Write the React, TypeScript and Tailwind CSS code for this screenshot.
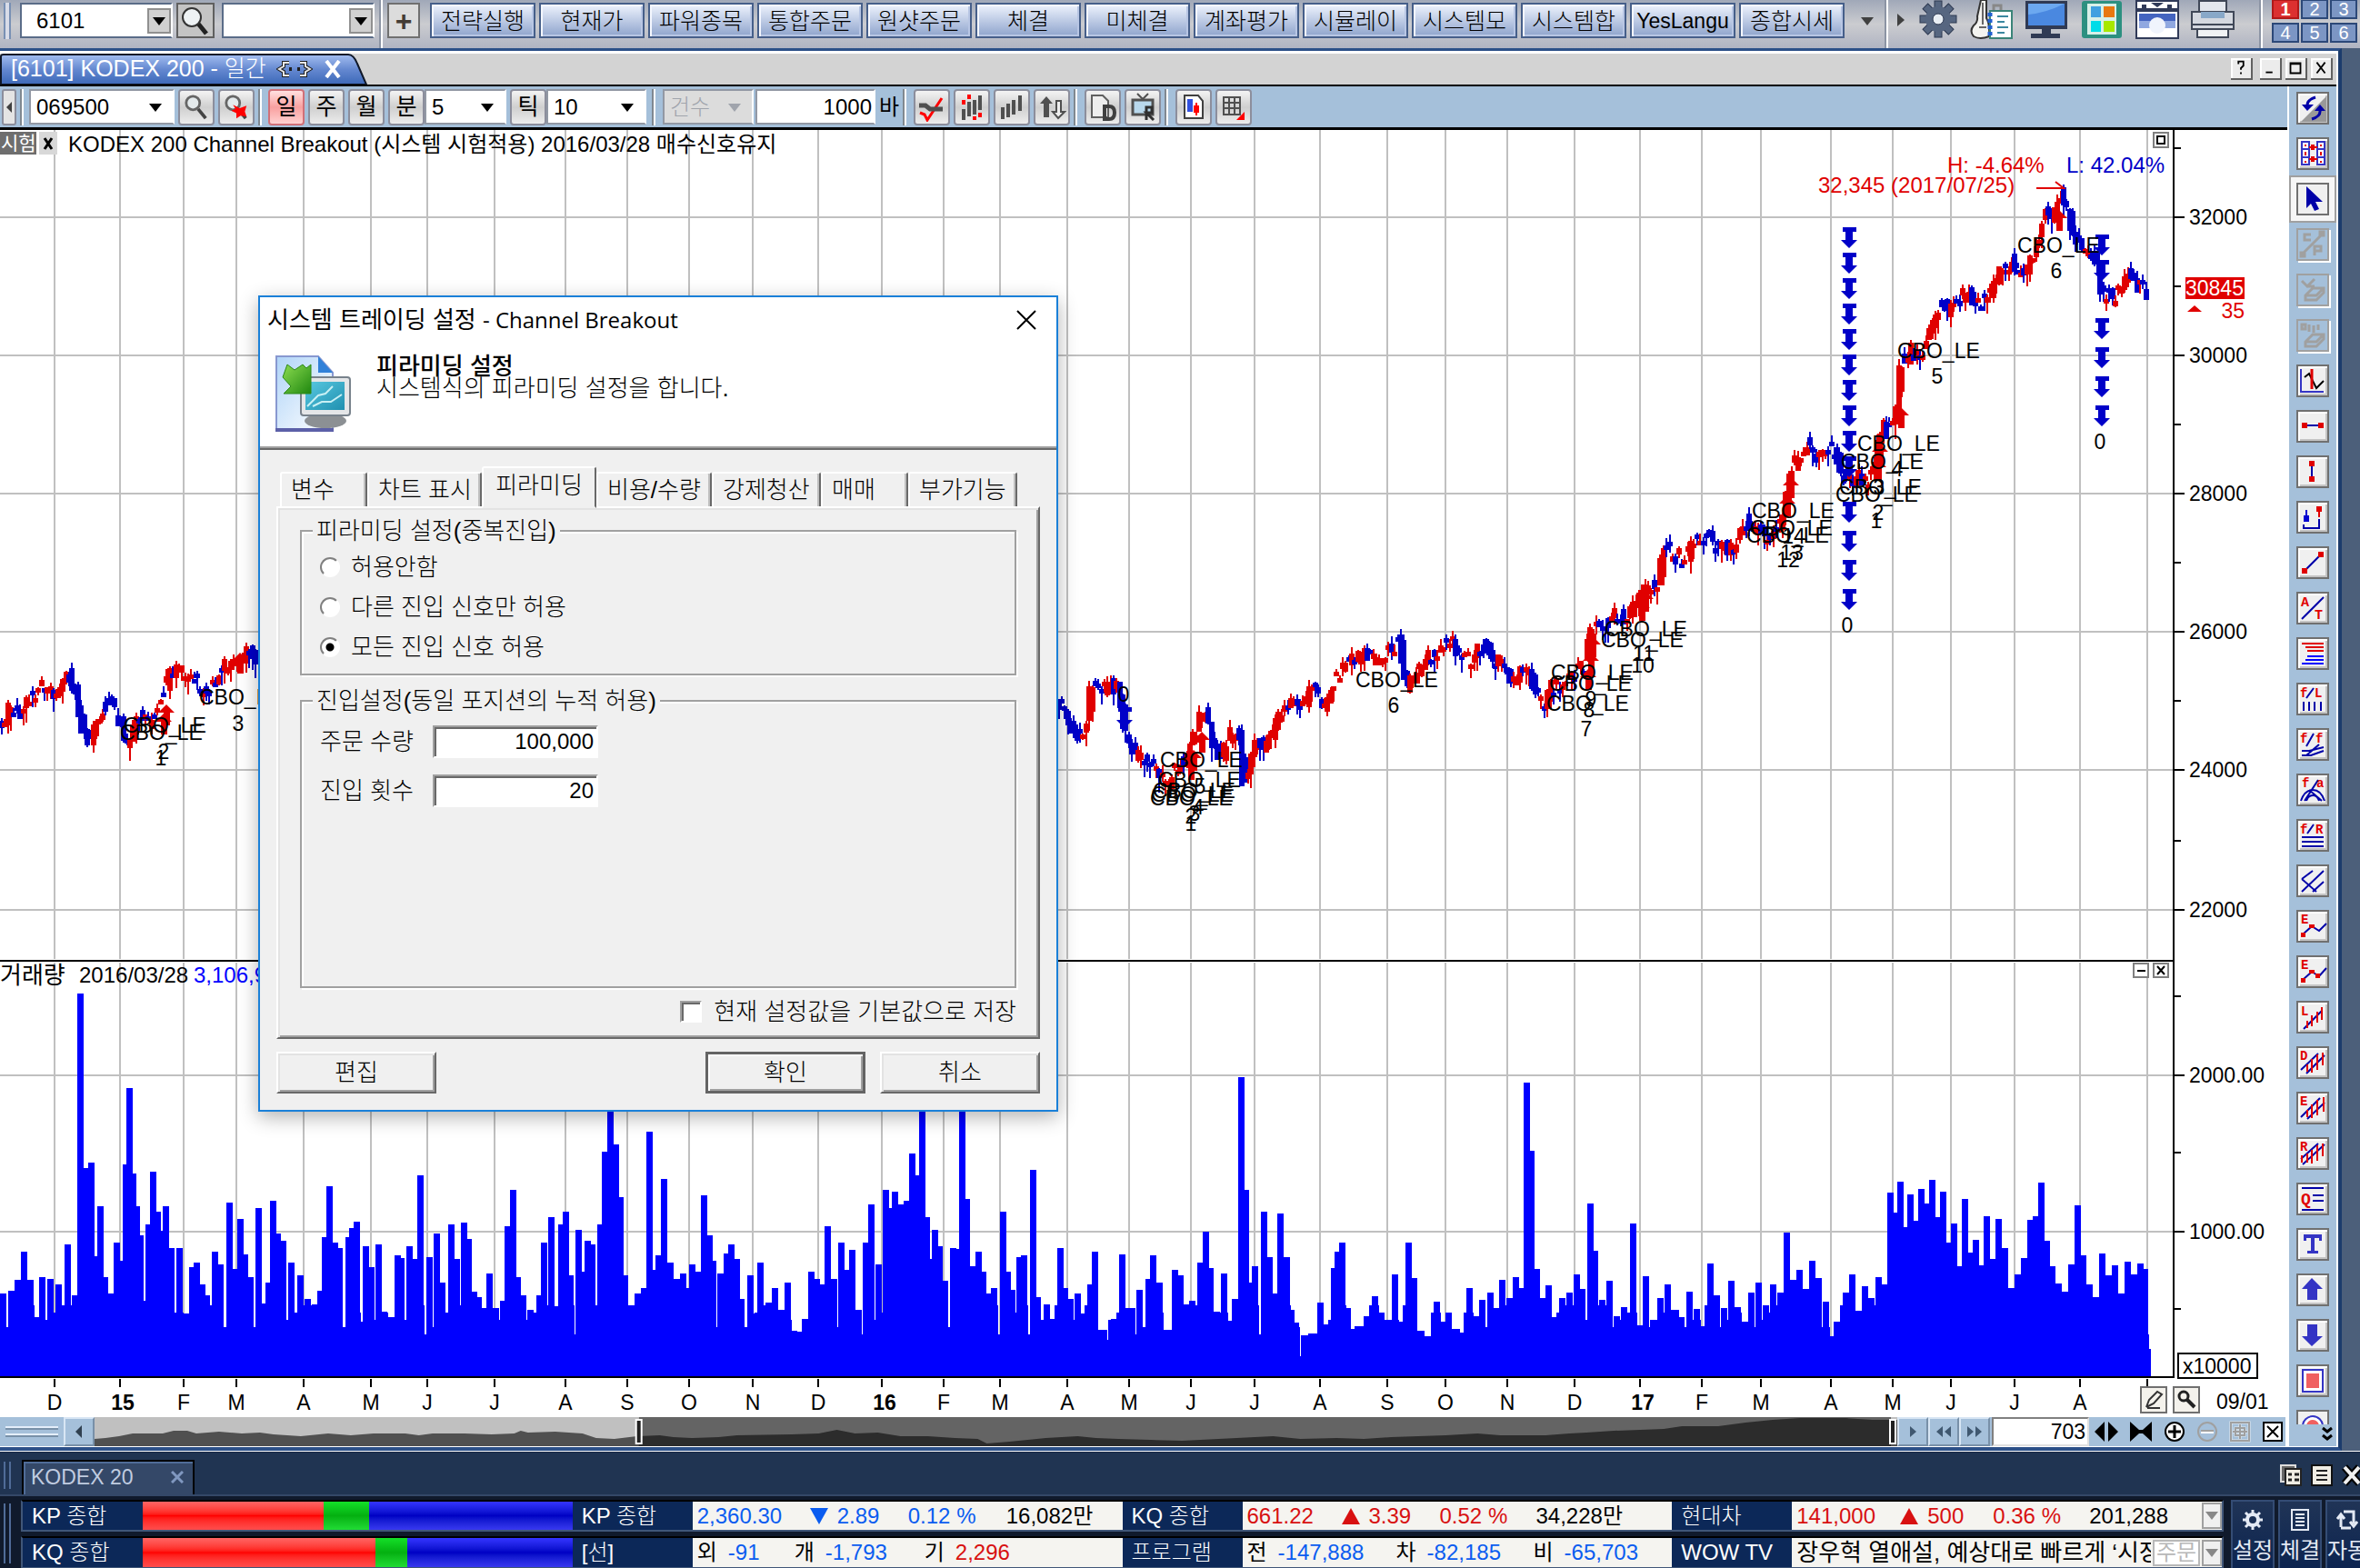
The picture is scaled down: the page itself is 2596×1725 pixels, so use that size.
import type { ReactNode } from 'react';

const BLUE = '#0000c8';
const RED = '#e00000';

const shortcuts = [
  '전략실행', '현재가', '파워종목', '통합주문', '원샷주문', '체결', '미체결',
  '계좌평가', '시뮬레이', '시스템모', '시스템합', 'YesLangu', '종합시세',
];

const months: [number, string][] = [
  [60, 'D'], [132, '15'], [202, 'F'], [260, 'M'], [334, 'A'], [408, 'M'], [470, 'J'], [544, 'J'], [622, 'A'],
  [690, 'S'], [758, 'O'], [828, 'N'], [900, 'D'], [970, '16'], [1038, 'F'], [1100, 'M'], [1174, 'A'], [1242, 'M'],
  [1310, 'J'], [1380, 'J'], [1452, 'A'], [1526, 'S'], [1590, 'O'], [1658, 'N'], [1732, 'D'], [1804, '17'],
  [1872, 'F'], [1937, 'M'], [2014, 'A'], [2082, 'M'], [2146, 'J'], [2216, 'J'], [2288, 'A'], [2362, ''],
];

const priceLevels: [number, string][] = [
  [239, '32000'], [391, '30000'], [543, '28000'], [695, '26000'], [847, '24000'], [1001, '22000'],
  [1183, '2000.00'], [1355, '1000.00'],
];
const minorTicks = [163, 315, 467, 619, 771, 925, 1096, 1268, 1440];

// closing price track: x, y
const pricePath: [number, number][] = [
  [1, 803], [14, 773], [24, 789], [33, 769], [46, 752], [62, 763], [75, 742], [83, 755], [91, 800], [102, 818],
  [113, 775], [123, 776], [134, 798], [142, 823], [153, 780], [165, 798], [177, 766], [191, 737], [210, 743],
  [230, 763], [244, 737], [260, 726], [277, 714], [284, 730], [400, 760], [1100, 790], [1169, 778], [1181, 809],
  [1196, 800], [1201, 757], [1220, 755], [1232, 757], [1236, 789], [1244, 823], [1268, 843], [1285, 861],
  [1299, 841], [1312, 823], [1325, 777], [1334, 817], [1346, 832], [1356, 806], [1364, 800], [1369, 868],
  [1382, 806], [1392, 829], [1406, 792], [1420, 769], [1435, 772], [1449, 755], [1459, 780], [1468, 749],
  [1483, 729], [1500, 720], [1515, 724], [1540, 704], [1548, 760], [1573, 720], [1598, 704], [1614, 728],
  [1631, 712], [1650, 729], [1664, 751], [1677, 734], [1686, 751], [1698, 774], [1707, 756], [1722, 752],
  [1736, 738], [1746, 735], [1748, 711], [1753, 693], [1765, 687], [1779, 676], [1793, 678], [1805, 658],
  [1815, 649], [1827, 640], [1830, 602], [1841, 613], [1855, 613], [1865, 595], [1880, 591], [1889, 604],
  [1913, 600], [1920, 571], [1932, 586], [1947, 591], [1961, 573], [1968, 542], [1971, 519], [1985, 493],
  [1992, 488], [1997, 502], [2009, 493], [2021, 504], [2033, 533], [2047, 524], [2057, 533], [2066, 497],
  [2071, 470], [2080, 475], [2088, 448], [2090, 392], [2095, 403], [2104, 383], [2114, 399], [2124, 368],
  [2131, 336], [2138, 332], [2145, 345], [2157, 328], [2167, 323], [2181, 332], [2190, 319], [2200, 296],
  [2214, 287], [2224, 301], [2231, 296], [2241, 269], [2250, 236], [2260, 236], [2267, 216], [2274, 223],
  [2281, 261], [2291, 269], [2303, 278], [2310, 305], [2314, 323], [2324, 328], [2334, 319], [2341, 305],
  [2351, 312], [2368, 323],
];

// volume bars: x, height
const volume: [number, number][] = [
  [3, 91], [12, 94], [19, 106], [26, 137], [33, 106], [40, 65], [46, 109], [55, 107], [64, 101], [74, 145], [82, 89],
  [88, 421], [93, 229], [96, 178], [100, 235], [105, 132], [110, 187], [115, 109], [121, 91], [128, 147], [133, 127],
  [138, 233], [142, 317], [146, 223], [150, 187], [154, 155], [158, 83], [163, 167], [168, 225], [173, 181],
  [177, 160], [182, 187], [188, 141], [197, 141], [205, 69], [211, 120], [216, 125], [222, 101], [227, 89],
  [236, 137], [242, 123], [252, 191], [258, 118], [264, 173], [269, 134], [275, 109], [284, 185], [290, 80],
  [295, 103], [300, 193], [305, 157], [311, 149], [320, 125], [330, 111], [338, 85], [346, 79], [352, 94], [357, 153],
  [362, 209], [368, 147], [373, 141], [383, 153], [387, 163], [392, 170], [397, 60], [402, 143], [408, 120], [416, 145],
  [422, 71], [430, 65], [437, 133], [441, 130], [450, 143], [456, 129], [462, 221], [472, 131], [480, 157], [486, 103],
  [496, 167], [502, 129], [510, 169], [515, 151], [521, 93], [526, 87], [532, 75], [538, 113], [545, 75], [553, 83],
  [558, 165], [564, 205], [569, 109], [575, 89], [583, 73], [593, 89], [598, 147], [606, 175], [611, 77], [617, 167],
  [622, 181], [627, 111], [636, 161], [641, 115], [646, 149], [651, 145], [660, 167], [665, 247], [671, 310], [677, 255],
  [682, 197], [687, 111], [694, 78], [701, 91], [708, 97], [714, 269], [720, 117], [724, 133], [730, 217], [737, 125],
  [744, 107], [751, 113], [756, 97], [761, 123], [768, 115], [774, 199], [780, 155], [784, 127], [792, 113], [799, 135],
  [804, 145], [810, 129], [815, 85], [825, 111], [831, 69], [836, 125], [845, 81], [852, 97], [859, 73], [866, 103],
  [872, 50], [879, 49], [885, 63], [892, 115], [898, 107], [903, 101], [910, 165], [917, 107], [925, 147], [931, 117],
  [937, 139], [943, 73], [952, 147], [958, 189], [966, 123], [974, 205], [979, 185], [984, 203], [990, 189], [997, 193],
  [1003, 245], [1007, 221], [1014, 301], [1019, 175], [1024, 129], [1028, 161], [1033, 143], [1039, 105], [1048, 141],
  [1054, 140], [1058, 295], [1063, 195], [1069, 121], [1076, 137], [1081, 115], [1087, 91], [1093, 97], [1103, 181],
  [1108, 115], [1113, 95], [1121, 131], [1126, 133], [1136, 227], [1141, 87], [1151, 79], [1158, 63], [1166, 141],
  [1171, 97], [1177, 85], [1185, 91], [1192, 69], [1199, 101], [1204, 137], [1213, 51], [1225, 63], [1234, 134],
  [1244, 75], [1253, 95], [1263, 107], [1268, 133], [1275, 103], [1284, 51], [1292, 117], [1298, 111], [1304, 79],
  [1311, 83], [1320, 125], [1326, 159], [1331, 119], [1338, 71], [1346, 113], [1353, 61], [1358, 85], [1365, 329],
  [1370, 205], [1375, 103], [1380, 121], [1390, 181], [1396, 131], [1401, 91], [1408, 179], [1415, 131], [1420, 73],
  [1425, 59], [1431, 22], [1437, 45], [1445, 47], [1452, 81], [1458, 57], [1467, 119], [1471, 137], [1476, 147],
  [1482, 75], [1488, 52], [1496, 55], [1506, 66], [1512, 88], [1519, 70], [1526, 62], [1534, 112], [1541, 60],
  [1549, 147], [1555, 108], [1562, 50], [1570, 44], [1580, 82], [1586, 60], [1593, 70], [1601, 52], [1608, 48],
  [1616, 97], [1624, 66], [1630, 84], [1639, 92], [1646, 75], [1652, 106], [1660, 86], [1667, 109], [1673, 97],
  [1679, 323], [1684, 248], [1690, 118], [1697, 86], [1703, 100], [1710, 65], [1718, 86], [1726, 92], [1734, 112],
  [1740, 96], [1749, 190], [1754, 138], [1762, 84], [1770, 105], [1778, 66], [1786, 76], [1796, 168], [1802, 56],
  [1810, 110], [1818, 62], [1826, 86], [1834, 101], [1842, 73], [1849, 65], [1858, 93], [1866, 74], [1874, 55],
  [1881, 124], [1888, 89], [1896, 75], [1904, 105], [1911, 76], [1918, 60], [1926, 92], [1934, 103], [1942, 78],
  [1950, 101], [1958, 92], [1965, 158], [1972, 106], [1979, 117], [1986, 96], [1993, 127], [2000, 108], [2008, 82],
  [2015, 44], [2023, 60], [2030, 92], [2037, 112], [2044, 72], [2051, 99], [2058, 86], [2066, 109], [2073, 101],
  [2079, 202], [2085, 180], [2090, 214], [2095, 164], [2101, 200], [2107, 171], [2113, 206], [2119, 190],
  [2125, 216], [2131, 175], [2137, 203], [2142, 147], [2149, 168], [2155, 121], [2161, 195], [2167, 136],
  [2173, 150], [2179, 122], [2185, 176], [2191, 129], [2198, 173], [2205, 141], [2212, 97], [2219, 112],
  [2226, 130], [2233, 172], [2239, 176], [2245, 213], [2251, 149], [2257, 121], [2264, 102], [2271, 93],
  [2278, 123], [2285, 188], [2291, 133], [2298, 101], [2305, 87], [2312, 135], [2319, 111], [2326, 122],
  [2333, 91], [2340, 126], [2347, 112], [2354, 124], [2359, 118],
];

// signal captions: x, y, order number, number x, number y
const signals: [number, number, string, number, number][] = [
  [2219, 270, '6', 2262, 298], [2087, 386, '5', 2131, 414], [2043, 488, '4', 2087, 516], [2025, 508, '3', 2067, 536],
  [2023, 536, '2', 2066, 564], [2019, 544, '1', 2064, 573], [1927, 562, '14', 1973, 590], [1925, 581, '13', 1971, 608],
  [1921, 589, '12', 1967, 616], [1765, 692, '11', 1808, 719], [1761, 704, '10', 1807, 732], [1706, 740, '9', 1750, 769],
  [1704, 752, '8', 1748, 781], [1701, 774, '7', 1745, 802], [219, 767, '3', 262, 796], [136, 798, '2', 180, 827],
  [132, 806, '1', 177, 834], [1276, 836, '5', 1320, 865], [1274, 858, '4', 1318, 888], [1268, 870, '3', 1314, 895],
  [1265, 878, '2', 1310, 898], [1266, 874, '1', 1310, 906], [1491, 748, '6', 1533, 776],
];

const sellArrows: [number, number][] = [
  [2034, 250], [2034, 278], [2034, 306], [2034, 334], [2034, 362], [2034, 390], [2034, 418], [2034, 446], [2034, 474],
  [2034, 502], [2034, 552], [2034, 584], [2034, 616], [2034, 648], [2312, 258], [2312, 286], [2312, 350], [2312, 382],
  [2312, 414], [2312, 446], [1237, 778],
];
const buyArrows: [number, number][] = [
  [2265, 231], [2091, 448], [2068, 488], [2066, 505], [1970, 525], [1966, 545], [1810, 650], [1806, 660], [1752, 700],
  [1750, 718], [1747, 736], [183, 775], [180, 785], [264, 718], [1322, 805], [1313, 825], [1310, 835],
];

const overview =
  '103,24 115,23 130,21 145,18 178,18 190,15 205,15 215,18 240,16 265,18 285,17 300,19 330,21 360,18 385,20 410,18 445,18 460,20 475,18 510,18 540,19 565,18 572,15 580,17 610,16 640,18 655,23 675,24 700,21 725,20 740,22 760,23 790,22 810,20 870,19 900,18 920,14 940,18 965,17 990,21 1020,21 1050,23 1075,24 1085,29 1110,27 1150,23 1185,21 1205,23 1230,24 1265,25 1300,26 1340,24 1380,22 1400,21 1430,24 1470,23 1500,24 1530,22 1590,20 1625,18 1650,20 1700,20 1726,18 1745,17 1775,15 1830,13 1850,10 1890,10 1920,6 1950,3 1980,1 2030,1 2060,3 2087,3';

function noise(i: number) {
  const v = Math.sin(i * 127.1) * 43758.5453;
  return v - Math.floor(v) - 0.5;
}

function priceAt(x: number) {
  const i = Math.max(1, pricePath.findIndex(p => p[0] >= x));
  const [x0, y0] = pricePath[i - 1];
  const [x1, y1] = pricePath[i];
  return y0 + ((y1 - y0) * (x - x0)) / (x1 - x0);
}

function Candles() {
  const out: ReactNode[] = [];
  for (let i = 0; i < 703; i++) {
    const x = 2 + i * 3.36;
    if (x > 284 && x < 1164) continue;
    const open = priceAt(Math.max(1, x - 3)) + noise(i) * 20;
    const close = priceAt(Math.min(2368, x + 2)) + noise(i + 400) * 20;
    const top = Math.min(open, close);
    const h = Math.max(5, Math.abs(close - open));
    const color = close < open ? RED : BLUE;
    out.push(
      <g key={i} fill={color}>
        <rect x={x - 3} y={top} width={6} height={h} />
        <rect x={x - 1} y={top - Math.abs(noise(i + 31)) * 16} width={2} height={h + Math.abs(noise(i + 77)) * 36} />
      </g>,
    );
  }
  return <g shapeRendering="crispEdges">{out}</g>;
}

function Chart() {
  return (
    <svg viewBox="0 143 2516 1416" className="block w-full bg-white" fontFamily="'Liberation Sans','Noto Sans CJK KR',sans-serif" fontSize="23">
      <g fill="#c0c0c0" shapeRendering="crispEdges">
        {months.map(([x]) => (
          <g key={x}>
            <rect x={x - 1} y={143} width={2} height={912} />
            <rect x={x - 1} y={1059} width={2} height={457} />
          </g>
        ))}
        {priceLevels.map(([y]) => (
          <rect key={y} x={0} y={y - 1} width={2390} height={2} />
        ))}
      </g>

      {/* axes */}
      <g fill="#000" shapeRendering="crispEdges">
        <rect x={2390} y={143} width={2} height={1373} />
        <rect x={0} y={1056} width={2391} height={2} />
        <rect x={0} y={1514} width={2392} height={2} />
        {minorTicks.map(y => (
          <rect key={y} x={2392} y={y - 1} width={7} height={2} />
        ))}
        {priceLevels.map(([y]) => (
          <rect key={y} x={2392} y={y - 1} width={11} height={2} />
        ))}
        {months.map(([x]) => (
          <rect key={x} x={x - 1} y={1517} width={2} height={9} />
        ))}
      </g>
      {priceLevels.map(([y, label]) => (
        <text key={y} x={2408} y={y + 8}>{label}</text>
      ))}
      {months.map(([x, label]) => (
        <text key={x} x={label.length > 1 ? x + 3 : x} y={1551} textAnchor="middle" fontWeight={label.length > 1 ? 700 : 400}>{label}</text>
      ))}

      {/* volume */}
      <g fill="#0000ff" shapeRendering="crispEdges">
        {volume.map(([x, h], i) => (
          <g key={i}>
            <rect x={x - 3} y={1514 - h} width={7} height={h} />
            <rect x={x - 6} y={1514 - Math.min(h, 46 + (i % 5) * 8)} width={11} height={Math.min(h, 46 + (i % 5) * 8)} />
          </g>
        ))}
        <rect x={0} y={1474} width={1428} height={40} />
        <rect x={1434} y={1474} width={926} height={40} />
        <rect x={2358} y={1484} width={8} height={30} />
      </g>

      <Candles />
      <g fill={BLUE}>
        {sellArrows.map(([x, y], i) => (
          <path key={i} d={`M${x - 7} ${y}h15v5h-4v9h5l-9 9l-9-9h5v-9h-3z`} />
        ))}
      </g>
      <g fill={RED}>
        {buyArrows.map(([x, y], i) => (
          <path key={i} d={`M${x} ${y}l9 9h-5v14h-7v-14h-6z`} />
        ))}
      </g>
      {signals.map(([x, y, n, nx, ny], i) => (
        <g key={i}>
          <text x={x} y={y + 8}>CBO_LE</text>
          <text x={nx} y={ny + 8} textAnchor="middle">{n}</text>
        </g>
      ))}
      <g textAnchor="middle">
        <text x={2032} y={696}>0</text>
        <text x={2310} y={494}>0</text>
        <text x={1236} y={772}>0</text>
      </g>

      <g fontSize="24">
        <text x={2142} y={190} fill={RED}>H: -4.64%</text>
        <text x={2273} y={190} fill={BLUE}>L: 42.04%</text>
        <text x={2000} y={212} fill={RED}>32,345 (2017/07/25)</text>
      </g>
      <path d="M2240 207h30l-9-7" fill="none" stroke={RED} strokeWidth={2} />

      <rect x={2404} y={305} width={65} height={24} fill={RED} />
      <text x={2404} y={325} fill="#fff">30845</text>
      <path d="M2406 343l8-7l8 7z" fill={RED} />
      <text x={2469} y={350} textAnchor="end" fill={RED}>35</text>

      {/* captions */}
      <rect x={0} y={145} width={40} height={25} fill="#6e6e6e" />
      <text x={1} y={165} fontSize="21" fill="#fff">시험</text>
      <rect x={43} y={145} width={20} height={25} fill="#d8d8d8" />
      <path d="M49 152l8 12m0-12l-8 12" stroke="#000" strokeWidth={3} />
      <text x={75} y={167} fontSize="24">KODEX 200 Channel Breakout (시스템 시험적용) 2016/03/28 매수신호유지</text>
      <text x={0} y={1082} fontSize="26">거래량</text>
      <text x={87} y={1081} fontSize="24">2016/03/28</text>
      <text x={213} y={1081} fontSize="24" fill="#0000ff">3,106,920</text>

      <g fill="#fff" stroke="#808080" strokeWidth={2}>
        <rect x={2369} y={146} width={16} height={16} />
        <rect x={2347} y={1060} width={16} height={15} />
        <rect x={2369} y={1060} width={16} height={15} />
      </g>
      <path d="M2373 150h8v8h-8zM2351 1068h9M2373 1063l8 9m0-9l-8 9" fill="none" stroke="#000" strokeWidth={2} />

      <rect x={2396} y={1489} width={87} height={27} fill="#fff" stroke="#000" strokeWidth={2} />
      <text x={2401} y={1511}>x10000</text>

      <g fill="#f4f2ec" stroke="#707070" strokeWidth={2}>
        <rect x={2355} y={1526} width={28} height={28} />
        <rect x={2391} y={1526} width={28} height={28} />
      </g>
      <path d="M2361 1548l3-8l9-9l5 3l-9 10l-8 4M2362 1549h14" fill="none" stroke="#333" strokeWidth={2} />
      <circle cx={2402} cy={1536} r={5} fill="none" stroke="#222" strokeWidth={3} />
      <path d="M2406 1540l8 8" stroke="#222" strokeWidth={4} />
      <text x={2438} y={1550}>09/01</text>
    </svg>
  );
}

const B = '#0000a8';
const I = '#3434c4';
const R = '#e00000';
const G = '#a0a0a0';

const letter = (s: string, x: number, y: number, size = 14) => (
  <text x={x} y={y} fontSize={size} fontWeight={700} fill={R} fontFamily="'Liberation Mono',monospace">{s}</text>
);

const drawingTools: { name: string; disabled?: boolean; active?: boolean; icon: ReactNode }[] = [
  { name: 'refresh', icon: <><path d="M31 3v28H3z" fill="#999" /><path d="M19 4q-10 3-9 10M15 28q10-3 9-10" fill="none" stroke={B} strokeWidth={3} /><path d="M4 12h13l-7 7zM18 19h12l-6-7z" fill={B} /></> },
  { name: 'link', icon: <><path d="M4 3h8v25H4zM21 3h8v25h-8zM4 11h8M4 20h8M21 11h8M21 20h8" fill="#fff" stroke={I} strokeWidth={2} /><path d="M12 9h9M12 22h9M8 6v2M8 14v4M8 24v2M25 6v2M25 14v4M25 24v2" stroke={R} strokeWidth={2} /><path d="M14 6h4v6h-4zM14 19h4v6h-4z" fill={R} /></> },
  { name: 'pointer', active: true, icon: <path d="M9 2v24l5-5l4 8l5-2l-4-8h8z" fill={B} /> },
  { name: 'cp', disabled: true, icon: <path d="M14 5H7v6h7M18 28V18h7v5h-7M4 27L27 4M3 25h4v4H3zM24 2h4v4h-4z" fill="none" stroke={G} strokeWidth={3} /> },
  { name: 'eraser', disabled: true, icon: <path d="M4 6l6 6l8-8M10 12h8M8 22l8-8h12v5l-8 8H8zM8 22h12l8-8" fill="none" stroke={G} strokeWidth={3} /> },
  { name: 'eraser-all', disabled: true, icon: <path d="M4 4h4v5H4zM12 4v8M17 5v8M22 4v6M8 23l8-8h12v5l-8 8H8zM8 23h12l8-8" fill="none" stroke={G} strokeWidth={3} /> },
  { name: 'crosshair', icon: <><path d="M3 3v25h25" fill="none" stroke={I} strokeWidth={2} /><path d="M7 12l5-4l8 16l8-8" fill="none" stroke="#000" strokeWidth={2} /><path d="M15 3v22" stroke={R} strokeWidth={3} /></> },
  { name: 'hline', icon: <><path d="M6 15h20" stroke={B} strokeWidth={2} /><path d="M4 12h6v6H4zM22 12h6v6h-6z" fill={R} /></> },
  { name: 'vline', icon: <><path d="M15 6v20" stroke={B} strokeWidth={2} /><path d="M12 4h6v6h-6zM12 21h6v6h-6z" fill={R} /></> },
  { name: 'range', icon: <><path d="M6 24v4h17V18" fill="none" stroke={B} strokeWidth={2} /><path d="M6 14h6v7H6zM8 8h2v6H8z" fill="#0000d0" /><path d="M20 4h6v6h-6zM22 10h2v6h-2z" fill={R} /></> },
  { name: 'trend', icon: <><path d="M6 26L26 6" stroke={B} strokeWidth={2} /><path d="M4 22h6v6H4zM22 4h6v6h-6z" fill={R} /></> },
  { name: 'at', icon: <><path d="M4 28L28 4" stroke={B} strokeWidth={2} />{letter('A', 3, 14, 15)}{letter('T', 18, 28, 15)}</> },
  { name: 'fib', icon: <><path d="M4 5h24M8 9h20M10 13h18" stroke={R} strokeWidth={2} /><path d="M10 19h18M8 23h20M4 27h24" stroke="#0000ff" strokeWidth={2} /></> },
  { name: 'fib-line', icon: <><path d="M9 15l8-11M6 19v10M12 19v10M18 19v10M25 19v10" stroke={B} strokeWidth={2} />{letter('f', 2, 14)}{letter('L', 18, 14)}</> },
  { name: 'fib-fan', icon: <><path d="M9 18l8-14M4 23h8l16-4M4 28h10l14-5M9 28l14-12" fill="none" stroke={B} strokeWidth={2} />{letter('f', 2, 14)}{letter('f', 19, 14)}</> },
  { name: 'fib-arc', icon: <><path d="M3 28q4-12 13-12t13 12M9 28q2-6 7-6t7 6M7 28L22 5M12 16l14 12" fill="none" stroke={B} strokeWidth={2} />{letter('f', 4, 13)}{letter('a', 20, 13)}</> },
  { name: 'fib-ret', icon: <><path d="M10 14l7-10M4 18h24M4 23h24M4 28h24" stroke={B} strokeWidth={2} />{letter('f', 2, 14)}{letter('R', 19, 14)}</> },
  { name: 'andrews', icon: <path d="M4 14l16 14M4 14L16 5M4 28L28 5M16 28l12-11" fill="none" stroke={B} strokeWidth={2} /> },
  { name: 'elliott-3', icon: <><path d="M5 25l10-9l8 5l8-8" fill="none" stroke={B} strokeWidth={2} /><path d="M3 23h5v5H3zM12 14h6v4h-6z" fill={R} />{letter('E', 3, 13)}</> },
  { name: 'elliott-5', icon: <><path d="M5 25l10-9l8 5l8-9" fill="none" stroke={B} strokeWidth={2} /><path d="M3 23h5v5H3zM12 14h6v4h-6zM19 18h5v5h-5z" fill={R} />{letter('E', 3, 13)}</> },
  { name: 'L', icon: <><path d="M6 29L26 9" stroke={B} strokeWidth={2} /><path d="M10 20v8M15 14v12M21 10v12M26 5v14" stroke={R} strokeWidth={2} />{letter('L', 3, 14)}</> },
  { name: 'D', icon: <><path d="M3 24L22 6M9 28L29 8" stroke={B} strokeWidth={2} /><path d="M10 18v8M15 12v15M21 7v17M27 5v14" stroke={R} strokeWidth={2} />{letter('D', 2, 13)}</> },
  { name: 'E', icon: <><path d="M3 26L24 5M10 28L29 10" stroke={B} strokeWidth={2} /><path d="M10 18v8M15 12v15M21 7v17M28 4v16" stroke={R} strokeWidth={2} />{letter('E', 2, 13)}</> },
  { name: 'R', icon: <><path d="M3 22L22 5M5 28L29 6" stroke={B} strokeWidth={2} /><path d="M4 18v8M10 16v10M15 12v15M21 7v17M27 5v14" stroke={R} strokeWidth={2} />{letter('R', 2, 13)}</> },
  { name: 'Q', icon: <><path d="M4 4h24M16 12h12M16 18h12M4 28h24" stroke={B} strokeWidth={2} />{letter('Q', 3, 22, 18)}</> },
  { name: 'text', icon: <path d="M6 5h20v7h-3V9h-5v14h4v3H10v-3h4V9H9v3H6z" fill={I} /> },
  { name: 'up', icon: <path d="M15 3l12 12h-6v12H10V15H4z" fill={I} /> },
  { name: 'down', icon: <path d="M15 28l12-11h-6V4H10v13H4z" fill={I} /> },
  { name: 'rect', icon: <><path d="M5 4h22v24H5z" fill="#fff" stroke={I} strokeWidth={2} /><path d="M9 8h14v16H9z" fill="#f06060" /></> },
];

function DrawingBar() {
  return (
    <aside className="relative w-[54px] shrink-0 border-l-2 border-white bg-[#a5c0da]">
      <div className="flex flex-col items-center gap-[14px] pt-[6px]">
        {drawingTools.map(t => (
          <button
            key={t.name}
            aria-label={t.name}
            disabled={t.disabled}
            className={
              t.disabled
                ? 'size-9 border-2 border-[#a0a0a0] shadow-[2px_2px_0_#fff]'
                : t.active
                  ? 'size-9 border-2 border-[#707070] bg-[#f0f0f0] outline-6 outline-[#f6f6f6] shadow-[0_0_0_8px_#a0a0a0]'
                  : 'size-9 border-2 border-[#707070] bg-[#f0f0f0] shadow-[inset_2px_2px_0_#fff,inset_-2px_-2px_0_#c4c4c4]'
            }
          >
            <svg viewBox="0 0 32 32" className="block size-8">{t.icon}</svg>
          </button>
        ))}
        <button aria-label="circle" className="h-4 w-9 overflow-hidden border-2 border-b-0 border-[#707070] bg-[#f0f0f0]">
          <svg viewBox="0 0 32 32" className="block size-8">
            <circle cx={16} cy={16} r={11} fill="#fff" stroke={I} strokeWidth={2} />
            <circle cx={16} cy={16} r={7} fill="#f06060" />
          </svg>
        </button>
      </div>
      <svg viewBox="0 0 12 18" className="absolute right-1 bottom-1 h-[18px] w-3">
        <path d="M1 2l5 4l5-4M1 10l5 4l5-4" fill="none" stroke="#000" strokeWidth={3} />
      </svg>
    </aside>
  );
}

function Arrow({ className = '' }: { className?: string }) {
  return (
    <svg viewBox="0 0 14 9" className={`h-[9px] w-[14px] ${className}`}>
      <path d="M0 0h14L7 9z" fill="currentColor" />
    </svg>
  );
}

function TopCombo({ value, label }: { value: string; label: string }) {
  return (
    <div className="relative h-[39px] w-[168px] border-2 border-[#5a6c88] border-r-white bg-white">
      <select aria-label={label} className="size-full appearance-none bg-white pl-4 text-[24px] leading-none">
        <option>{value}</option>
      </select>
      <span className="pointer-events-none absolute top-1 right-0 flex h-7 w-[26px] items-center justify-center border-2 border-[#909090] bg-[#d0d0d0]">
        <Arrow />
      </span>
    </div>
  );
}

function TopBar() {
  return (
    <header className="flex h-[53px] items-start overflow-hidden bg-linear-to-b from-[#a0a8b8] via-[#cbccd0] to-[#b0b4c2] pt-[3px] pl-1">
      <div className="mr-[10px] h-10 w-2 shrink-0 border-x-2 border-[#7890b4] bg-[#d8dce8]" />
      <div className="flex shrink-0 gap-1">
        <TopCombo value="6101" label="화면번호" />
        <button aria-label="검색" className="flex h-[39px] w-[42px] items-center justify-center border-2 border-[#606060] bg-[#c4c4c4]">
          <svg viewBox="0 0 32 34" className="h-[34px] w-8">
            <path d="M19 20l9 11" stroke="#222" strokeWidth={5} />
            <circle cx={12} cy={13} r={10} fill="#eef2f4" stroke="#333" strokeWidth={2} />
          </svg>
        </button>
        <div className="ml-1">
          <TopCombo value="" label="메뉴검색" />
        </div>
      </div>
      <div className="mx-[5px] -mt-1 h-[54px] w-1 shrink-0 border-l-2 border-[#8c94a4] bg-white" />
      <button className="h-[39px] w-9 shrink-0 border-2 border-[#707070] bg-[#dcdcdc] text-[32px] leading-[32px] font-bold text-[#443c34]">+</button>
      <nav className="ml-[11px] flex shrink-0 gap-1">
        {shortcuts.map(s => (
          <button key={s} className="h-[39px] w-[116px] border-2 border-[#465f8a] bg-linear-to-b from-[#eef3fd] to-[#8fa4cc] text-center text-[25px] leading-[34px] font-light whitespace-nowrap shadow-[inset_2px_2px_0_#f4f7ff,inset_-2px_-2px_0_#b8c6e4]">
            {s === 'YesLangu' ? <span className="text-[23px]">{s}</span> : s}
          </button>
        ))}
      </nav>
      <Arrow className="mt-[16px] ml-[18px] shrink-0 text-[#404040]" />
      <div className="ml-3 -mt-1 h-[54px] w-1 shrink-0 border-l-2 border-[#8c94a4] bg-white" />
      <svg viewBox="0 0 8 14" className="mt-3 ml-[10px] h-[14px] w-2 shrink-0"><path d="M0 0l8 7l-8 7z" fill="#404040" /></svg>
      <div className="-mt-[3px] ml-[15px] flex shrink-0 gap-[11px]">
        <svg viewBox="0 0 44 44" className="size-11">
          <g transform="translate(22 21)" fill="#566680" stroke="#2c3850" strokeWidth={1}>
            {[0, 45, 90, 135].map(a => (
              <rect key={a} x={-4} y={-20} width={8} height={40} transform={`rotate(${a})`} />
            ))}
            <circle r={14} stroke="none" />
            <circle r={6} fill="#e8eef4" />
          </g>
        </svg>
        <svg viewBox="0 0 50 44" className="h-11 w-[50px]">
          <path d="M14 0h6v20q4 6 3 20q-10 4-17 0Q1 34 6 28q5-4 4-10z" fill="#f4f4f0" stroke="#333" strokeWidth={2} />
          <path d="M16 3v24M12 30h8" stroke="#666" strokeWidth={2} />
          <path d="M28 11V6h8v6" fill="none" stroke="#888" strokeWidth={3} />
          <rect x={24} y={12} width={24} height={30} fill="#fff" stroke="#3a8478" strokeWidth={2} />
          <path d="M32 18h12M32 24h8M32 30h12M32 36h8" stroke="#3c88a0" strokeWidth={2} />
          <path d="M24 14v27" stroke="#2060d0" strokeWidth={5} strokeDasharray="4 3" />
        </svg>
        <svg viewBox="0 0 50 44" className="h-11 w-[50px]">
          <rect x={2} y={1} width={46} height={31} fill="#303a54" />
          <rect x={5} y={4} width={40} height={24} fill="#6ca8f0" />
          <path d="M5 16q20-2 40-12v24H5z" fill="#4a88e0" />
          <path d="M20 32h10v5h10v5H8v-5h12z" fill="#303a54" />
        </svg>
        <svg viewBox="0 0 50 44" className="h-11 w-[50px]">
          <rect x={3} y={1} width={44} height={41} rx={3} fill="#2c9080" />
          <rect x={9} y={4} width={32} height={34} fill="#d8f0e8" />
          <rect x={13} y={7} width={11} height={12} fill="#40a0e0" />
          <rect x={27} y={7} width={12} height={12} fill="#e87810" />
          <rect x={13} y={23} width={11} height={12} fill="#00dce8" />
          <rect x={27} y={23} width={12} height={12} fill="#a8e800" />
        </svg>
        <svg viewBox="0 0 50 44" className="h-11 w-[50px]">
          <path d="M2 1h46v9H2zM2 12h46v30H2z" fill="#fff" stroke="#303a58" strokeWidth={2} />
          <path d="M5 15h40v8H5z" fill="#4464c0" />
          <path d="M5 23h40v8H5z" fill="#90a8e0" />
          <path d="M8 5h5v4H8zM36 5h5v4h-5zM18 3h14l-7 5z" fill="#303a58" />
          <ellipse cx={25} cy={28} rx={9} ry={9} fill="#f0f4fc" />
        </svg>
        <svg viewBox="0 0 50 44" className="h-11 w-[50px]">
          <path d="M10 1h30v12H10z" fill="#e4e8ee" stroke="#404858" strokeWidth={2} />
          <path d="M2 13h46v19H2z" fill="#d4d8e0" stroke="#404858" strokeWidth={2} />
          <path d="M12 13h26v7H12z" fill="#88a8c8" />
          <path d="M2 27h46" stroke="#404858" strokeWidth={2} />
          <path d="M8 32h34v9H8z" fill="#f0f2f4" stroke="#404858" strokeWidth={2} />
        </svg>
      </div>
      <div className="ml-[26px] -mt-1 h-[54px] w-1 shrink-0 border-l-2 border-[#8c94a4] bg-white" />
      <div className="-mt-1 ml-[10px] grid shrink-0 grid-cols-3 gap-x-[2px] gap-y-1">
        {['1', '2', '3', '4', '5', '6'].map(n => (
          <button
            key={n}
            className={`h-[22px] w-[30px] border-2 text-[20px] leading-[18px] text-white ${n === '1' ? 'border-[#b01818] bg-[#dc3030] font-bold' : 'border-[#2c4878] bg-[#7c96c4]'}`}
          >
            {n}
          </button>
        ))}
      </div>
    </header>
  );
}

function TitleTabs() {
  return (
    <div className="flex h-9 items-center border-b-2 border-black bg-[#d3d3d3]">
      <div className="relative flex h-[34px] w-[404px] items-center pl-3 whitespace-nowrap">
        <svg viewBox="0 0 404 34" className="absolute inset-0 h-[34px] w-[404px]">
          <defs>
            <linearGradient id="tab" x1="0" y1="0" x2="0" y2="1">
              <stop offset="0" stopColor="#a4bef0" />
              <stop offset="0.5" stopColor="#6488d0" />
              <stop offset="1" stopColor="#3c68b8" />
            </linearGradient>
          </defs>
          <path d="M1 34V3q0-2 3-2h379q6 0 10 10l10 23z" fill="url(#tab)" stroke="#101828" strokeWidth={2} />
        </svg>
        <span className="relative w-[292px] text-[25px] font-light text-white">[6101] KODEX 200 - 일간</span>
        <svg viewBox="0 0 40 20" className="relative h-5 w-10">
          <path d="M14 3H8v4l-5 3l5 3v4h6M26 3h6v4l5 3l-5 3v4h-6M14 10h3M23 10h3" fill="none" stroke="#202020" strokeWidth={4} />
          <path d="M14 3H8v4l-5 3l5 3v4h6M26 3h6v4l5 3l-5 3v4h-6" fill="none" stroke="#e8e8e8" strokeWidth={2} />
        </svg>
        <svg viewBox="0 0 20 20" className="relative ml-3 size-5"><path d="M3 1l14 18M17 1L3 19" stroke="#fff" strokeWidth={4} /></svg>
      </div>
      <div className="ml-auto flex gap-1 pr-1">
        {['M9 7V4h6v5l-3 3v2M12 17v2', 'M7 17h8', 'M6 6h12v12H6zM6 7h12', 'M7 5l10 13M17 5L7 18'].map((d, i) => (
          <button
            key={d}
            aria-label={['도움말', '최소화', '최대화', '닫기'][i]}
            className={`h-6 w-6 border-r-2 border-b-2 border-[#606060] bg-[#ececec] shadow-[inset_2px_2px_0_#fff] ${i === 0 ? 'mr-1' : ''}`}
          >
            <svg viewBox="0 0 24 24" className="size-[22px]"><path d={d} fill="none" stroke="#000" strokeWidth={2} /></svg>
          </button>
        ))}
      </div>
    </div>
  );
}

const toolBtn = 'flex h-10 w-10 shrink-0 items-center justify-center rounded-[4px] border-2 border-[#8c8e9c] bg-linear-to-b from-[#f4f4f4] via-[#cfcfcf] to-[#ececec] text-[25px] leading-none';

function Sep() {
  return <div className="h-10 w-1 shrink-0 border-l-2 border-[#808890] bg-white" />;
}

function ToolCombo({ value, label, width, muted }: { value: string; label: string; width: string; muted?: boolean }) {
  return (
    <div className={`relative h-[39px] shrink-0 border-2 border-[#9298a4] border-r-white ${width} ${muted ? 'bg-[#dcdcdc] text-[#a0a4ac]' : 'bg-white'}`}>
      <select aria-label={label} className="size-full appearance-none pl-[6px] text-[24px] leading-none font-light">
        <option>{value}</option>
      </select>
      <Arrow className="pointer-events-none absolute top-[14px] right-3" />
    </div>
  );
}

function Toolbar() {
  return (
    <div className="flex h-[48px] items-center border-b-3 border-black bg-[#a5c0da] pl-[2px] whitespace-nowrap">
      <button aria-label="이전" className="flex h-10 w-4 items-center justify-center rounded-[3px] border-2 border-[#8c8e9c] bg-[#e4e4e4]">
        <svg viewBox="0 0 6 12" className="h-3 w-[6px]"><path d="M6 0v12L0 6z" fill="#404040" /></svg>
      </button>
      <div className="ml-1"><Sep /></div>
      <div className="ml-[6px] flex items-center gap-1">
        <ToolCombo value="069500" label="종목코드" width="w-[160px]" />
        <button aria-label="종목검색" className={toolBtn}>
          <svg viewBox="0 0 28 30" className="size-7"><path d="M16 17l9 11" stroke="#444" strokeWidth={4} /><circle cx={10} cy={10} r={8} fill="#e4eaec" stroke="#666" strokeWidth={3} /></svg>
        </button>
        <button aria-label="종목추가" className={toolBtn}>
          <svg viewBox="0 0 28 30" className="size-7"><path d="M16 17l9 11" stroke="#444" strokeWidth={4} /><circle cx={10} cy={10} r={8} fill="#e4eaec" stroke="#666" strokeWidth={3} /><path d="M10 12l8 4l8-3l-2 7l2 6l-7-1l-5 3v-6l-6-3l5-2z" fill="#ff0000" /></svg>
        </button>
      </div>
      <div className="mx-1"><Sep /></div>
      <div className="flex items-center gap-1 pl-[3px]">
        <button className="flex h-10 w-10 shrink-0 items-center justify-center rounded-[4px] border-2 border-[#d07078] bg-linear-to-b from-[#ffe0e0] via-[#f8a0a0] to-[#ffd0d0] text-[25px] leading-none">일</button>
        <button className={toolBtn}>주</button>
        <button className={toolBtn}>월</button>
        <div className="flex items-center">
          <button className={toolBtn}>분</button>
          <ToolCombo value="5" label="분 간격" width="w-[90px]" />
        </div>
        <div className="flex items-center">
          <button className={toolBtn}>틱</button>
          <ToolCombo value="10" label="틱 간격" width="w-[110px]" />
        </div>
      </div>
      <div className="mr-2 ml-[6px]"><Sep /></div>
      <ToolCombo value="건수" label="조회 기준" width="w-[100px]" muted />
      <input aria-label="봉 개수" defaultValue="1000" className="ml-[2px] h-[39px] w-[132px] border-2 border-[#9298a4] border-r-white bg-white pr-[2px] text-right text-[24px]" />
      <span className="ml-1 text-[24px]">바</span>
      <div className="mr-2 ml-1"><Sep /></div>
      <div className="flex gap-1">
        <button aria-label="추세" className={toolBtn}>
          <svg viewBox="0 0 32 32" className="size-8"><path d="M3 22l5 2l3 6l8-12l8-12" fill="none" stroke="#ff0000" strokeWidth={3} /><path d="M2 14h7l5 4h14" fill="none" stroke="#505050" strokeWidth={5} /></svg>
        </button>
        <button aria-label="신호" className={toolBtn}>
          <svg viewBox="0 0 32 32" className="size-8"><path d="M7 18v12M13 10v16M19 8v16M25 3v16" stroke="#505050" strokeWidth={4} /><path d="M5 8h4v5H5zM11 2h4v5h-4zM17 26h4v4h-4zM23 22h4v5h-4z" fill="#ff0000" /></svg>
        </button>
        <button aria-label="막대" className={toolBtn}>
          <svg viewBox="0 0 32 32" className="size-8"><path d="M6 16v13M12 12v15M18 8v16M25 3v17" stroke="#505050" strokeWidth={4} /></svg>
        </button>
        <button aria-label="상하" className={toolBtn}>
          <svg viewBox="0 0 32 32" className="size-8"><path d="M10 4l7 8h-4v15H7V12H3z" fill="#505050" /><path d="M21 9h5v12h4l-7 7l-6-7h4z" fill="#eee" stroke="#505050" strokeWidth={2} /></svg>
        </button>
      </div>
      <div className="mr-2 ml-1"><Sep /></div>
      <div className="flex gap-1">
        <button aria-label="문서" className={toolBtn}>
          <svg viewBox="0 0 32 32" className="size-8"><path d="M4 3h12l6 6v18H4z" fill="#eee" stroke="#606060" strokeWidth={2} /><path d="M18 15h5q6 0 6 7t-6 7h-5z" fill="none" stroke="#404040" strokeWidth={4} /></svg>
        </button>
        <button aria-label="실시간" className={toolBtn}>
          <svg viewBox="0 0 32 32" className="size-8"><path d="M10 1l6 6l6-6" fill="none" stroke="#505050" strokeWidth={2} /><rect x={5} y={8} width={22} height={16} fill="#b8d8ec" stroke="#505050" strokeWidth={3} /><path d="M20 30V16h6v6h-6l8 8" fill="none" stroke="#303030" strokeWidth={3} /></svg>
        </button>
      </div>
      <div className="mr-2 ml-1"><Sep /></div>
      <div className="flex gap-1">
        <button aria-label="캔들" className={toolBtn}>
          <svg viewBox="0 0 32 32" className="size-8"><path d="M6 3h15l5 6v19H6z" fill="#fff" stroke="#404040" strokeWidth={2} /><path d="M9 7h6v14H9z" fill="#3050e0" /><path d="M19 11v14M17 15h4v6h-4z" fill="#fff" stroke="#f00" strokeWidth={2} /></svg>
        </button>
        <button aria-label="표" className={toolBtn}>
          <svg viewBox="0 0 32 32" className="size-8"><path d="M5 5h18v19H5zM11 5v19M17 5v19M5 11h18M5 17h18" fill="none" stroke="#505050" strokeWidth={2} /><path d="M28 21v9h-9z" fill="#ff0000" /></svg>
        </button>
      </div>
    </div>
  );
}

function RangeBar() {
  const btn = 'flex h-8 w-[34px] shrink-0 items-center justify-center border-2 border-[#d8e6f4] border-r-[#7890a8] border-b-[#7890a8] bg-[#a5c0da]';
  return (
    <div className="flex h-8 bg-[#a5c0da]">
      <div className="flex w-[70px] shrink-0 flex-col justify-center gap-1 px-[6px]">
        <div className="h-1 border-t-2 border-[#e4eefa] bg-[#7890a8]" />
        <div className="h-1 border-t-2 border-[#e4eefa] bg-[#7890a8]" />
      </div>
      <button aria-label="왼쪽" className={btn}>
        <svg viewBox="0 0 10 14" className="h-[14px] w-[10px]"><path d="M8 0v14L1 7z" fill="#304050" /></svg>
      </button>
      <svg viewBox="103 0 1984 32" preserveAspectRatio="none" className="h-8 min-w-0 flex-1">
        <rect x={103} y={0} width={1984} height={32} fill="#c0c0c0" />
        <polygon points={`103,32 ${overview} 2087,32`} fill="#505050" />
        <clipPath id="picked"><rect x={702} y={0} width={1378} height={32} /></clipPath>
        <g clipPath="url(#picked)">
          <rect x={702} y={0} width={1378} height={32} fill="#646464" />
          <polygon points={`103,32 ${overview} 2087,32`} fill="#2c2c2c" />
        </g>
        <rect x={699} y={3} width={6} height={26} fill="#202020" stroke="#fff" strokeWidth={2} />
        <rect x={2079} y={3} width={6} height={26} fill="#202020" stroke="#fff" strokeWidth={2} />
      </svg>
      <button aria-label="오른쪽" className={btn}><svg viewBox="0 0 24 14" className="h-[14px] w-6"><path d="M9 1l7 6l-7 6z" fill="#405870" /></svg></button>
      <button aria-label="처음" className={btn}><svg viewBox="0 0 24 14" className="h-[14px] w-6"><path d="M11 1v12L4 7zM20 1v12l-7-6z" fill="#405870" /></svg></button>
      <button aria-label="끝" className={btn}><svg viewBox="0 0 24 14" className="h-[14px] w-6"><path d="M4 1v12l7-6zM13 1v12l7-6z" fill="#405870" /></svg></button>
      <input aria-label="표시 봉 수" defaultValue="703" className="ml-[2px] h-8 w-[107px] shrink-0 border-2 border-[#808080] border-r-[#e0e0e0] border-b-[#e0e0e0] bg-white pr-[2px] text-right text-[23px]" />
      <div className="flex w-[218px] shrink-0 items-center gap-3 border-r-2 border-white pl-[6px]">
        <svg viewBox="0 0 26 24" className="h-6 w-[26px]"><path d="M11 1v22L0 12zM15 1v22l11-11z" /></svg>
        <svg viewBox="0 0 26 24" className="h-6 w-[26px]"><path d="M1 1v22l10-9h4l10 9V1L15 10h-4z" /></svg>
        <svg viewBox="0 0 24 24" className="size-6"><circle cx={12} cy={12} r={10} fill="#fff" stroke="#000" strokeWidth={2} /><path d="M12 5v14M5 12h14" stroke="#000" strokeWidth={3} /></svg>
        <svg viewBox="0 0 24 24" className="size-6"><circle cx={12} cy={12} r={10} fill="none" stroke="#a0a0a0" strokeWidth={2} /><path d="M5 11h14" stroke="#a0a0a0" strokeWidth={2} /><path d="M5 13h14" stroke="#fff" strokeWidth={2} /></svg>
        <svg viewBox="0 0 24 24" className="size-6"><path d="M2 2h20v20H2zM12 4v16M4 12h16M7 8h10v8H7z" fill="none" stroke="#e8eef4" strokeWidth={3} /><path d="M2 2h20v20H2zM12 4v16M4 12h16M7 8h10v8H7z" fill="none" stroke="#a0a0a0" strokeWidth={2} /></svg>
        <svg viewBox="0 0 24 24" className="size-6"><rect x={2} y={2} width={20} height={20} fill="#fff" stroke="#000" strokeWidth={2} /><path d="M6 6l12 12M18 6L6 18" stroke="#000" strokeWidth={2} /></svg>
      </div>
    </div>
  );
}

const raised = 'border-2 border-white border-r-[#696969] border-b-[#696969] shadow-[inset_2px_2px_0_#e3e3e3,inset_-2px_-2px_0_#a0a0a0]';

const tabs: [string, string][] = [
  ['변수', 'w-[96px]'], ['차트 표시', 'w-[126px]'], ['피라미딩', 'w-[126px]'], ['비용/수량', 'w-[127px]'],
  ['강제청산', 'w-[120px]'], ['매매', 'w-[96px]'], ['부가기능', 'w-[120px]'],
];

function SettingsDialog() {
  return (
    <div role="dialog" aria-labelledby="dialog-title" className="absolute top-[325px] left-[284px] w-[880px] border-2 border-[#1a80d8] bg-[#f0f0f0] text-[26px] font-light shadow-[0_6px_20px_rgba(0,0,0,0.3)]">
      <div className="h-[166px] border-b-2 border-[#a0a0a0] bg-white">
        <div className="flex h-[50px] items-center pl-2">
          <h2 id="dialog-title" className="font-normal">
            시스템 트레이딩 설정 <span className="font-[Open_Sans] text-[24px]">- Channel Breakout</span>
          </h2>
          <button aria-label="닫기" className="mr-[22px] ml-auto">
            <svg viewBox="0 0 22 22" className="size-[22px]"><path d="M1 1l20 20M21 1L1 21" stroke="#000" strokeWidth={2} /></svg>
          </button>
        </div>
        <div className="flex gap-[26px] pt-[10px] pl-4">
          <svg viewBox="0 0 86 90" className="h-[90px] w-[86px]">
            <defs>
              <linearGradient id="page" x1="0" y1="0" x2="1" y2="1"><stop offset="0" stopColor="#b0d4f8" /><stop offset="1" stopColor="#fff" /></linearGradient>
              <linearGradient id="screen" x1="0" y1="0" x2="1" y2="1"><stop offset="0" stopColor="#58c8e0" /><stop offset="1" stopColor="#2090b0" /></linearGradient>
              <linearGradient id="leaf" x1="0" y1="0" x2="1" y2="1"><stop offset="0" stopColor="#8cdc50" /><stop offset="1" stopColor="#208810" /></linearGradient>
            </defs>
            <path d="M2 5h46l16 18v62H2z" fill="url(#page)" stroke="#8898d0" strokeWidth={2} />
            <path d="M48 5l16 18H48z" fill="#3080d8" />
            <path d="M1 86h64" stroke="#5c60a8" strokeWidth={4} />
            <ellipse cx={56} cy={76} rx={23} ry={8} fill="#8c9094" />
            <rect x={29} y={28} width={54} height={42} rx={3} fill="#e4e6e8" stroke="#78828c" strokeWidth={2} />
            <rect x={34} y={33} width={43} height={31} fill="url(#screen)" />
            <path d="M36 60l12-12l8-2l8-8M42 60l10-5h10l12-8" fill="none" stroke="#c8f0f4" strokeWidth={2} />
            <path d="M14 14l8 6l9-6l4 4l5-4v32H10l8-8L9 28z" fill="url(#leaf)" stroke="#2c8818" />
          </svg>
          <div className="pt-1 leading-6">
            <p className="font-medium">피라미딩 설정</p>
            <p>시스템식의 피라미딩 설정을 합니다.</p>
          </div>
        </div>
      </div>
      <div className="border-t-2 border-[#696969] px-[18px] pt-[18px] pb-[18px]">
        <div role="tablist" className="flex h-11 items-end pl-1">
          {tabs.map(([name, w]) =>
            name === '피라미딩' ? (
              <button key={name} role="tab" aria-selected className={`relative -mb-[2px] h-[46px] rounded-t-[3px] border-2 border-white border-r-[#696969] border-b-[#f0f0f0] bg-[#f0f0f0] pb-1 text-center leading-none whitespace-nowrap ${w}`}>{name}</button>
            ) : (
              <button key={name} role="tab" className={`h-[38px] rounded-t-[3px] border-2 border-b-0 border-white border-r-[#696969] pl-[10px] text-left leading-none whitespace-nowrap shadow-[inset_-2px_0_0_#c0c0c0] ${w}`}>{name}</button>
            ),
          )}
        </div>
        <div className={`px-6 pt-[11px] pb-[12px] ${raised}`}>
          <fieldset className="h-[173px] border-2 border-[#a0a0a0] px-5 shadow-[2px_2px_0_#fff,inset_2px_2px_0_#fff]">
            <legend className="-ml-2 bg-[#f0f0f0] px-1 leading-[28px]">피라미딩 설정(중복진입)</legend>
            <div className="flex flex-col gap-4 pt-3">
              {['허용안함', '다른 진입 신호만 허용', '모든 진입 신호 허용'].map((s, i) => (
                <label key={s} className="flex items-center gap-3 leading-7">
                  <input
                    type="radio"
                    name="pyramiding"
                    defaultChecked={i === 2}
                    className="size-[22px] appearance-none rounded-full border-2 border-[#808080] border-r-white border-b-white bg-white checked:bg-[radial-gradient(circle,#000_0_4px,#fff_5px)]"
                  />
                  {s}
                </label>
              ))}
            </div>
          </fieldset>
          <fieldset className="mt-[14px] h-[330px] border-2 border-[#a0a0a0] px-5 shadow-[2px_2px_0_#fff,inset_2px_2px_0_#fff]">
            <legend className="-ml-2 bg-[#f0f0f0] px-1 leading-[28px]">진입설정(동일 포지션의 누적 허용)</legend>
            <div className="flex flex-col gap-[18px] pt-[13px]">
              {[['주문 수량', '100,000'], ['진입 횟수', '20']].map(([name, value]) => (
                <label key={name} className="flex h-9 items-center">
                  <span className="w-[124px]">{name}</span>
                  <input defaultValue={value} className="h-9 w-[182px] border-2 border-[#a0a0a0] border-r-white border-b-white bg-white pr-[3px] text-right text-[24px] shadow-[inset_2px_2px_0_#696969]" />
                </label>
              ))}
            </div>
          </fieldset>
          <label className="mt-[10px] flex items-center justify-end gap-[13px] leading-8">
            <input type="checkbox" className="size-6 appearance-none border-2 border-[#a0a0a0] border-r-white border-b-white bg-white shadow-[inset_2px_2px_0_#696969]" />
            현재 설정값을 기본값으로 저장
          </label>
        </div>
        <div className="flex gap-4 pt-[14px]">
          <button className={`h-[46px] w-44 leading-none ${raised}`}>편집</button>
          <button className="ml-auto h-[46px] w-44 border-3 border-[#646464] leading-none shadow-[inset_2px_2px_0_#fff,inset_-2px_-2px_0_#a0a0a0]">확인</button>
          <button className={`h-[46px] w-44 leading-none ${raised}`}>취소</button>
        </div>
      </div>
    </div>
  );
}

const blue = 'text-[#0a5cf0]';
const red = 'text-[#d81010]';

function DockLabel({ children }: { children: ReactNode }) {
  return <div className="flex items-center bg-[#0c2858] pl-[10px] text-[24px] font-light text-white">{children}</div>;
}

function Gauge({ parts }: { parts: [number, number, number] }) {
  return (
    <div className="flex">
      <div className="bg-linear-to-b from-[#ff6464] via-[#ff0000] to-[#ff4c4c]" style={{ flexGrow: parts[0] }} />
      <div className="bg-linear-to-b from-[#14e028] via-[#04b010] to-[#20dc34]" style={{ flexGrow: parts[1] }} />
      <div className="bg-linear-to-b from-[#3434ff] via-[#0000c4] to-[#3838f0]" style={{ flexGrow: parts[2] }} />
    </div>
  );
}

function Quote({ cols, tone, up, v }: { cols: string; tone: string; up?: boolean; v: string[] }) {
  return (
    <div className={`grid items-center bg-[#f5f4f0] pl-[5px] ${cols}`}>
      <span className={tone}>{v[0]}</span>
      <svg viewBox="0 0 20 18" className={`h-[18px] w-5 ${tone}`}><path d={up ? 'M10 0l10 18H0z' : 'M0 0h20L10 18z'} fill="currentColor" /></svg>
      <span className={tone}>{v[1]}</span>
      <span className={tone}>{v[2]}</span>
      <span>{v[3]}</span>
    </div>
  );
}

function Flow({ cols, items }: { cols: string; items: [string, string, string][] }) {
  return (
    <div className={`grid items-center bg-[#f5f4f0] pl-[5px] ${cols}`}>
      {items.map(([name, value, tone]) => (
        <span key={name} className="flex gap-3">
          {name}<span className={tone}>{value}</span>
        </span>
      ))}
    </div>
  );
}

function DropButton() {
  return (
    <button aria-label="펼치기" className="flex h-[29px] w-[22px] shrink-0 items-center justify-center border-2 border-[#a0a0a0] bg-[#f0f0f0]">
      <Arrow className="text-[#888]" />
    </button>
  );
}

function Dock() {
  const row = 'grid h-[35px] grid-cols-[132px_1fr_132px_1fr_132px_1fr_132px_1fr] border-2 border-[#405678] border-t-black';
  return (
    <footer className="overflow-hidden bg-[#101a2c] text-[24px] leading-none whitespace-nowrap">
      <div className="flex h-12 items-end border-b-2 border-[#344868] bg-[#203452] pl-1">
        <div className="mb-[6px] h-[30px] w-2 border-x-2 border-[#506c98]" />
        <div className="ml-3 flex h-[38px] w-[190px] items-center border-2 border-b-0 border-black bg-[#344868] pb-[2px] pl-2 text-[23px] text-[#c0cce0] shadow-[inset_2px_2px_0_#506c98]">
          KODEX 20
          <svg viewBox="0 0 14 14" className="mr-[10px] ml-auto size-[14px]"><path d="M1 1l12 12M13 1L1 13" stroke="#8098c0" strokeWidth={3} /></svg>
        </div>
        <div className="mb-[9px] ml-auto flex shrink-0 gap-[10px]">
          <svg viewBox="0 0 24 24" className="size-6"><path d="M1 1h16v18H1z" fill="#666" stroke="#ddd" strokeWidth={2} /><path d="M6 5h17v18H6z" fill="#f0ede4" stroke="#222" strokeWidth={2} /><path d="M9 11h4M16 11h5M9 17h4M16 17h5" stroke="#222" strokeWidth={3} /></svg>
          <svg viewBox="0 0 24 24" className="size-6"><path d="M1 1h22v22H1z" fill="#f0ede4" stroke="#111" strokeWidth={2} /><path d="M6 7h12M6 12h12M6 17h12" stroke="#222" strokeWidth={2} /></svg>
          <svg viewBox="0 0 20 24" className="h-6 w-5"><path d="M3 3l16 18M19 3L3 21" stroke="#000" strokeWidth={8} /><path d="M3 3l16 18M19 3L3 21" stroke="#f0f0f0" strokeWidth={4} /></svg>
        </div>
      </div>
      <div className="flex pt-1 pl-1">
        <div className="mt-1 h-[66px] w-2 shrink-0 border-x-2 border-[#506c98]" />
        <div className="ml-[11px] flex min-w-0 flex-1 flex-col gap-[5px]">
          <div className={row}>
            <DockLabel>KP 종합</DockLabel>
            <Gauge parts={[200, 50, 224]} />
            <DockLabel>KP 종합</DockLabel>
            <Quote cols="grid-cols-[124px_30px_78px_108px_1fr]" tone={blue} v={['2,360.30', '2.89', '0.12 %', '16,082만']} />
            <DockLabel>KQ 종합</DockLabel>
            <Quote cols="grid-cols-[104px_30px_78px_106px_1fr]" tone={red} up v={['661.22', '3.39', '0.52 %', '34,228만']} />
            <DockLabel>현대차</DockLabel>
            <div className="flex items-center bg-[#f5f4f0]">
              <div className="min-w-0 flex-1">
                <Quote cols="grid-cols-[114px_30px_72px_106px_1fr]" tone={red} up v={['141,000', '500', '0.36 %', '201,288']} />
              </div>
              <DropButton />
            </div>
          </div>
          <div className={row}>
            <DockLabel>KQ 종합</DockLabel>
            <Gauge parts={[257, 35, 182]} />
            <DockLabel>[선]</DockLabel>
            <Flow cols="grid-cols-[107px_143px_1fr]" items={[['외', '-91', blue], ['개', '-1,793', blue], ['기', '2,296', red]]} />
            <DockLabel>프로그램</DockLabel>
            <Flow cols="grid-cols-[164px_151px_1fr]" items={[['전', '-147,888', blue], ['차', '-82,185', blue], ['비', '-65,703', blue]]} />
            <DockLabel>WOW TV</DockLabel>
            <div className="flex min-w-0 items-center gap-[2px] bg-[#f5f4f0] pl-[5px]">
              <span className="min-w-0 flex-1 overflow-hidden text-[26px] leading-8">장우혁 열애설, 예상대로 빠르게 ‘시장</span>
              <button className="h-[29px] w-[52px] shrink-0 border-2 border-[#b8b8b8] bg-white text-[24px] leading-none text-[#b8b8b8]">주문</button>
              <DropButton />
            </div>
          </div>
        </div>
        <div className="ml-2 flex w-[142px] shrink-0 gap-1 overflow-hidden">
          {[
            ['설정', <><circle cx={12} cy={12} r={6} fill="none" stroke="currentColor" strokeWidth={4} /><path d="M12 1v4M12 19v4M1 12h4M19 12h4M4 4l3 3M17 17l3 3M20 4l-3 3M7 17l-3 3" stroke="currentColor" strokeWidth={3} /></>],
            ['체결', <path d="M3 1h18v22H3zM7 6h10M7 10h10M7 14h10M7 18h10" fill="none" stroke="currentColor" strokeWidth={2} />],
            ['자동', <path d="M5 20V8M1 11l4-5l4 5M8 3h11v13M15 14l4 5l4-5M5 21h11" fill="none" stroke="currentColor" strokeWidth={3} />],
          ].map(([name, icon]) => (
            <button key={name as string} className="flex h-[76px] w-12 shrink-0 flex-col items-center gap-[10px] border-x-2 border-t-2 border-[#344c74] bg-linear-to-b from-[#203456] to-[#0c2450] pt-2 text-[24px] text-[#e4eaf4]">
              <svg viewBox="0 0 24 24" className="size-6">{icon}</svg>
              {name}
            </button>
          ))}
        </div>
      </div>
    </footer>
  );
}

export default function App() {
  return (
    <div className="relative min-h-screen overflow-hidden bg-[#101a2c] font-['Liberation_Sans','Noto_Sans_CJK_KR',sans-serif] text-black">
      <TopBar />
      <div className="flex bg-[#4c5f7a]">
        <main className="min-w-0 flex-1 border-t-3 border-r-4 border-b-4 border-[#2c5088] border-r-[#1c3c6c]">
          <div className="border-t-3 border-r-2 border-b border-white">
            <TitleTabs />
            <div className="flex">
              <div className="min-w-0 flex-1">
                <Toolbar />
                <Chart />
                <RangeBar />
              </div>
              <DrawingBar />
            </div>
          </div>
        </main>
        <div className="w-5 shrink-0" />
      </div>
      <div className="h-[2px] border-t border-white bg-[#182848]" />
      <Dock />
      <SettingsDialog />
    </div>
  );
}
